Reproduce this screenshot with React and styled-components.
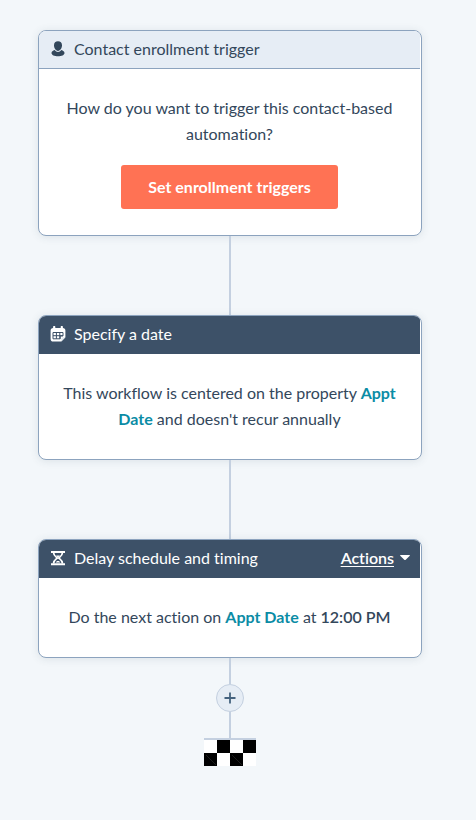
import styled, { createGlobalStyle } from "styled-components"

export default function App(){

    return(
        <>
            <GlobalStyle />
            <SCWorkflow>
                <SCCard>
                    <SCHeader $light>
                        <ContactIcon />
                        <h2>Contact enrollment trigger</h2>
                    </SCHeader>
                    <SCBody>
                        <p>How do you want to trigger this contact-based automation?</p>
                        <SCTriggerButton type="button">Set enrollment triggers</SCTriggerButton>
                    </SCBody>
                </SCCard>
                <SCConnector $size={79} />
                <SCCard>
                    <SCHeader>
                        <CalendarIcon />
                        <h2>Specify a date</h2>
                    </SCHeader>
                    <SCBody>
                        <p>This workflow is centered on the property <SCProperty>Appt Date</SCProperty> and doesn't recur annually</p>
                    </SCBody>
                </SCCard>
                <SCConnector $size={79} />
                <SCCard>
                    <SCHeader>
                        <HourglassIcon />
                        <h2>Delay schedule and timing</h2>
                        <SCActions type="button">
                            <span>Actions</span>
                            <svg width="10" height="5" viewBox="0 0 10 5" aria-hidden="true">
                                <path d="M0.6 0h8.8c.5 0 .7.5.4.8L5.7 4.7a1 1 0 0 1-1.4 0L.2.8C-.1.5.1 0 .6 0z" fill="currentColor" />
                            </svg>
                        </SCActions>
                    </SCHeader>
                    <SCBody>
                        <p>Do the next action on <SCProperty>Appt Date</SCProperty> at <SCTime>12:00 PM</SCTime></p>
                    </SCBody>
                </SCCard>
                <SCConnector $size={26} />
                <SCAddButton type="button" aria-label="Add action">
                    <svg width="12" height="12" viewBox="0 0 12 12" aria-hidden="true">
                        <path d="M6 .5v11M.5 6h11" stroke="currentColor" strokeWidth="1.8" />
                    </svg>
                </SCAddButton>
                <SCConnector $size={26} />
                <SCFinish>
                    <FinishFlag />
                </SCFinish>
            </SCWorkflow>
        </>
    )
}

function ContactIcon(){
    return(
        <svg width="16" height="16" viewBox="0 0 16 16" fill="currentColor" aria-hidden="true">
            <path d="M8 .3c2.500 0 4 1.600 4 4 0 2.600-1.600 5.600-4 5.600S4 6.900 4 4.300c0-2.400 1.500-4 4-4z" />
            <path d="M4.700 9.100c.9 1.300 2 1.900 3.300 1.900s2.400-.6 3.300-1.900c1.900.5 3.200 1.600 3.200 2.900 0 2-2.900 3.300-6.500 3.300S1.500 14 1.500 12c0-1.300 1.300-2.400 3.200-2.900z" />
        </svg>
    )
}

function CalendarIcon(){
    return(
        <svg width="16" height="16" viewBox="0 0 16 16" aria-hidden="true">
            <path d="M3.100 2V1a1.100 1.100 0 0 1 2.200 0v1h5.400V1a1.100 1.100 0 0 1 2.200 0v1c1.500 0 2.500.9 2.500 2.400V11.300L11.300 15.600H3.200C1.600 15.600.6 14.600.6 13V4.400C.6 2.900 1.600 2 3.100 2z" fill="currentColor" />
            <path d="M3 6.500h10v3.400h-2.800v2.900H3zM3 9.700h10M6.400 6.500v6.300M9.800 6.500v6.300" fill="none" stroke="#3d5168" strokeWidth="1" />
            <path d="M11.300 15.600v-2.300c0-1.300.7-2 2-2h2.100z" fill="#e3e8ee" />
        </svg>
    )
}

function HourglassIcon(){
    return(
        <svg width="16" height="16" viewBox="0 0 16 16" fill="none" stroke="currentColor" aria-hidden="true">
            <path d="M1 1.900h14M1 14.200h14" strokeWidth="2" />
            <path d="M3.500 2.500c0 3 2.300 4.200 3.800 5.500-1.500 1.300-3.800 2.500-3.800 5.500M12.500 2.500c0 3-2.300 4.200-3.800 5.500 1.500 1.300 3.800 2.500 3.800 5.500" strokeWidth="1.700" />
            <path d="M6 5.600h4L8 7.800zM5.700 12.600c.3-1 1.100-1.600 2.300-1.600s2 .6 2.300 1.600z" fill="currentColor" stroke="none" />
        </svg>
    )
}

function FinishFlag(){
    return(
        <svg width="52" height="26" viewBox="0 0 52 26" aria-hidden="true">
            <path d="M0 0h52v26H0z" fill="#ffffff" />
            <path d="M13 0h13v13H13zM39 0h13v13H39zM0 13h13v13H0zM26 13h13v13H26z" fill="#000000" />
            <path d="M2 15l10 10M28 15l10 10" stroke="#1c1c1c" strokeWidth="1" />
        </svg>
    )
}

const GlobalStyle = createGlobalStyle`
    *{
        box-sizing: border-box;
    }

    body{
        margin: 0;
        background-color: #f3f7fa;
        color: #33475b;
        font-family: 'Lato', 'Liberation Sans', sans-serif;
        font-size: 16px;
        line-height: 26px;
        font-variant-ligatures: none;
    }

    h2, p{
        margin: 0;
        font-size: 16px;
        font-weight: 400;
    }

    svg{
        display: block;
        flex-shrink: 0;
    }

    button{
        font-family: inherit;
        font-size: 16px;
        font-variant-ligatures: inherit;
        cursor: pointer;
    }
`

const SCWorkflow = styled.main`
    display: flex;
    flex-direction: column;
    align-items: center;
    padding: 30px 54px 54px 38px;
`

const SCCard = styled.section`
    width: 100%;
    max-width: 480px;
    padding-right: 1px;
    background-color: #ffffff;
    border: 1px solid #8ca3be;
    border-radius: 8px;
    box-shadow: 0 1px 8px rgba(51, 71, 91, 0.12);
    overflow: hidden;
`

const SCHeader = styled.header`
    display: flex;
    align-items: center;
    gap: 8px;
    height: 38px;
    padding: 0 10px 2px 11px;
    background-color: ${({ $light }) => $light ? "#e6edf5" : "#3d5168"};
    color: ${({ $light }) => $light ? "#33475b" : "#ffffff"};
    border-bottom: 1px solid ${({ $light }) => $light ? "#8ca3be" : "#3d5168"};
`

const SCBody = styled.div`
    display: flex;
    flex-direction: column;
    align-items: center;
    gap: 18px;
    padding: 26px 22px;
    text-align: center;

    p:last-child{
        margin-bottom: 1px;
    }
`

const SCTriggerButton = styled.button`
    height: 44px;
    padding: 0 27px 2px;
    border: none;
    border-radius: 3px;
    background-color: #ff7254;
    color: #ffffff;
    font-weight: 700;
`

const SCProperty = styled.strong`
    color: #0b8ca5;
    font-weight: 700;
`

const SCTime = styled.strong`
    font-weight: 600;
`

const SCActions = styled.button`
    display: flex;
    align-items: center;
    gap: 6px;
    margin-left: auto;
    padding: 0;
    border: none;
    background: none;
    color: inherit;
    font-weight: 600;

    span{
        text-decoration: underline;
        text-underline-offset: 2px;
    }
`

const SCConnector = styled.div`
    width: 2px;
    height: ${({ $size }) => $size}px;
    background-color: #c4d0e0;
`

const SCAddButton = styled.button`
    display: flex;
    align-items: center;
    justify-content: center;
    width: 28px;
    height: 28px;
    padding: 0;
    border: 1px solid #c4d0e0;
    border-radius: 50%;
    background-color: #e6edf5;
    color: #45637f;
`

const SCFinish = styled.div`
    border-top: 2px solid #c4d0e0;
`
